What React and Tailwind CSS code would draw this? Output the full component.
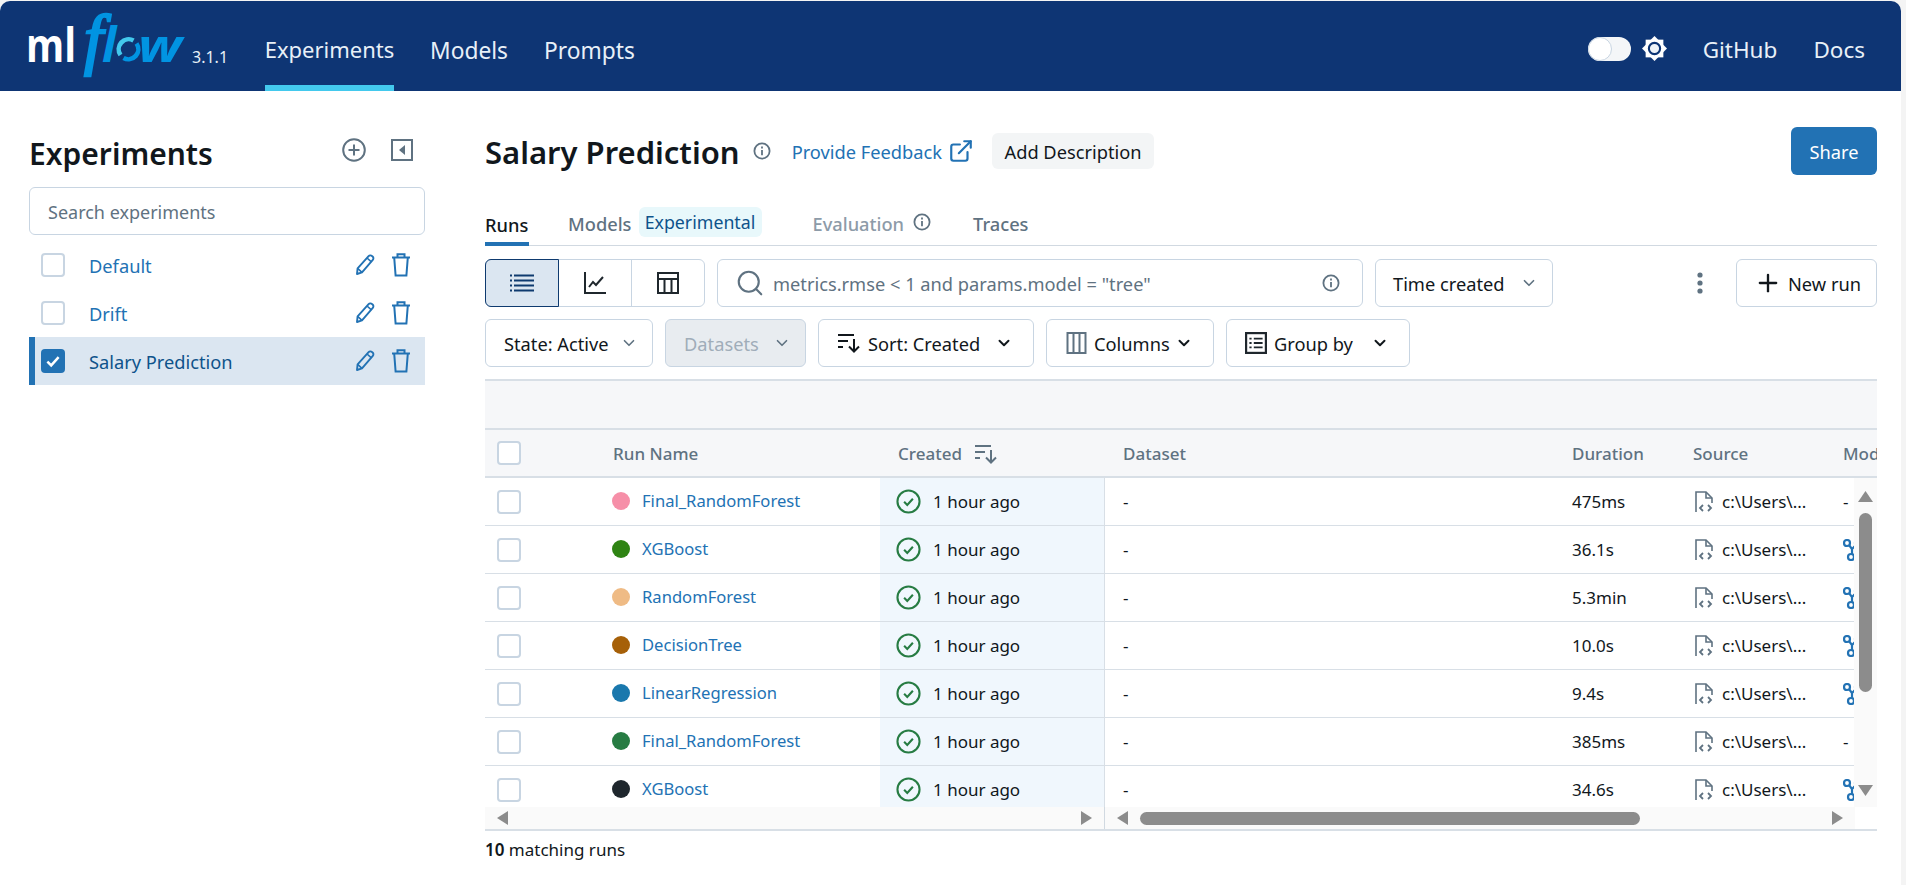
import { ChevronDown, Search, Plus, ExternalLink } from 'lucide-react';

const runs = [
  { name: 'Final_RandomForest', color: 'bg-[#f68fa8]', duration: '475ms', model: false },
  { name: 'XGBoost', color: 'bg-[#2f8413]', duration: '36.1s', model: true },
  { name: 'RandomForest', color: 'bg-[#efbb85]', duration: '5.3min', model: true },
  { name: 'DecisionTree', color: 'bg-[#a66008]', duration: '10.0s', model: true },
  { name: 'LinearRegression', color: 'bg-[#1a78ad]', duration: '9.4s', model: true },
  { name: 'Final_RandomForest', color: 'bg-[#277c43]', duration: '385ms', model: false },
  { name: 'XGBoost', color: 'bg-[#1f272d]', duration: '34.6s', model: true },
];

function InfoIcon({ className }) {
  return (
    <svg viewBox="0 0 18 18" fill="none" className={className}>
      <circle cx="9" cy="9" r="7.6" stroke="currentColor" strokeWidth="1.8" />
      <path d="M9 8v5.2M9 4.6v1.8" stroke="currentColor" strokeWidth="1.8" />
    </svg>
  );
}

function SortIcon({ className }) {
  return (
    <svg viewBox="0 0 24 20" fill="none" className={className}>
      <path d="M1 2h16M1 8h10M1 14h5" stroke="currentColor" strokeWidth="2" />
      <path d="M17 6v12M12 13.5l5 5 5-5" stroke="currentColor" strokeWidth="2" />
    </svg>
  );
}

function SourceIcon() {
  return (
    <svg viewBox="0 0 18 22" fill="none" className="w-[18px] h-[22px] text-[#5f7281]">
      <path d="M1 21V1h10l6 6v5" stroke="currentColor" strokeWidth="1.6" />
      <path d="M11 1v6h6" stroke="currentColor" strokeWidth="1.6" />
      <path d="M8 14l-3 3 3 3M13 14l3 3-3 3" stroke="currentColor" strokeWidth="1.8" />
    </svg>
  );
}

function ModelIcon() {
  return (
    <svg viewBox="0 0 20 22" fill="none" className="w-[20px] h-[22px] text-[#2272b4] shrink-0">
      <circle cx="4" cy="4" r="3" stroke="currentColor" strokeWidth="2.2" />
      <circle cx="15" cy="4" r="3" stroke="currentColor" strokeWidth="2.2" />
      <circle cx="8" cy="18" r="3" stroke="currentColor" strokeWidth="2.2" />
      <path d="M6 6l3 4v5M13 6l-4 4" stroke="currentColor" strokeWidth="2.2" />
    </svg>
  );
}

function CheckCircle() {
  return (
    <svg viewBox="0 0 24 24" fill="none" className="w-[25px] h-[25px] text-[#277c43] shrink-0">
      <circle cx="12" cy="12" r="10.6" stroke="currentColor" strokeWidth="2" />
      <path d="M7.8 12.3l3 3 5.4-6" stroke="currentColor" strokeWidth="2" />
    </svg>
  );
}

function PencilIcon() {
  return (
    <svg viewBox="0 0 20 22" fill="none" className="w-[20px] h-[22px] text-[#2272b4] shrink-0">
      <path d="M2 20l.6-5.6L13.6 2.2a2.4 2.4 0 0 1 3.4-.2l.6.5a2.4 2.4 0 0 1 .2 3.4L7 18.3z" stroke="currentColor" strokeWidth="1.9" strokeLinejoin="round" />
      <path d="M2.6 14.4L7 18.3M12 4l4.4 3.9" stroke="currentColor" strokeWidth="1.6" />
    </svg>
  );
}

function TrashIcon() {
  return (
    <svg viewBox="0 0 20 24" fill="none" className="w-[20px] h-[24px] text-[#2272b4] shrink-0">
      <path d="M6.5 4V1.2h7V4M1 4.5h18" stroke="currentColor" strokeWidth="2" />
      <path d="M3.2 4.5L4.6 22.5h10.8L16.8 4.5" stroke="currentColor" strokeWidth="2" />
    </svg>
  );
}

function Arrow({ dir }) {
  const paths = {
    left: 'M11 0v14L0 7z',
    right: 'M0 0v14l11-7z',
    up: 'M7.5 0L15 11H0z',
    down: 'M0 0h15L7.5 11z',
  };
  const size = dir === 'left' || dir === 'right' ? 'w-[11px] h-[14px]' : 'w-[15px] h-[11px]';
  const box = dir === 'left' || dir === 'right' ? '0 0 11 14' : '0 0 15 11';
  return (
    <svg viewBox={box} className={size + ' text-[#8c8c8c] shrink-0'}>
      <path d={paths[dir]} fill="currentColor" />
    </svg>
  );
}

function Checkbox() {
  return <div className="w-[24px] h-[24px] rounded-[4px] border-2 border-[#c8d5e2] bg-white shrink-0" />;
}

function Logo() {
  return (
    <svg viewBox="-3 0 159 90" className="w-[159px] h-[90px] shrink-0">
      <text x="-3" y="61" fontFamily="Open Sans" fontSize="46" fontWeight="700" fill="#fff" textLength="50" lengthAdjust="spacingAndGlyphs">ml</text>
      <text x="55" y="61" fontFamily="Liberation Serif" fontStyle="italic" fontSize="68" fill="#0194e2" stroke="#0194e2" strokeWidth="2.4">f</text>
      <text x="73" y="61" fontFamily="Open Sans" fontStyle="italic" fontSize="48" fontWeight="700" fill="#0194e2">l</text>
      <path d="M91.5 54a10 10 0 0 1 13-14.5" stroke="#43c9ed" strokeWidth="4.6" fill="none" />
      <path d="M107.5 42.5a10 10 0 0 1-13 14.5" stroke="#0194e2" strokeWidth="4.6" fill="none" />
      <text x="109" y="61" fontFamily="Open Sans" fontStyle="italic" fontSize="45" fontWeight="700" fill="#0194e2" textLength="44" lengthAdjust="spacingAndGlyphs">w</text>
    </svg>
  );
}

function ExperimentRow({ name, selected }) {
  return (
    <div className={'flex items-center h-[48px] ' + (selected ? 'bg-[#dbe6f1] border-l-[6px] border-[#2272b4] pl-[6px]' : 'pl-[12px]')}>
      {selected ? (
        <div className="w-[24px] h-[24px] rounded-[4px] bg-[#2272b4] flex items-center justify-center shrink-0">
          <svg viewBox="0 0 16 16" fill="none" className="w-[18px] h-[18px]">
            <path d="M3 8.5l3.4 3.4L13 4.5" stroke="#fff" strokeWidth="2.2" />
          </svg>
        </div>
      ) : (
        <Checkbox />
      )}
      <span className={'ml-[24px] pt-[2px] flex-1 text-[18.25px] ' + (selected ? 'text-[#0e538b]' : 'text-[#2272b4]')}>{name}</span>
      <PencilIcon />
      <div className="ml-[16px] mr-[14px]"><TrashIcon /></div>
    </div>
  );
}

function FilterButton({ children, className }) {
  return (
    <div className={'h-[48px] flex items-center rounded-[6px] border border-[#c8d5e2] text-[18.25px] ' + className}>
      {children}
    </div>
  );
}

export default function App() {
  return (
    <div className="w-[1906px] h-[885px] bg-[#f4f4f4] overflow-hidden pt-[1px] font-['Noto_Sans',sans-serif] text-[#11171c]">
      <div className="w-[1901px] h-[884px] bg-white rounded-t-[10px] overflow-hidden flex flex-col">
        {/* Top bar */}
        <header className="h-[90px] bg-[#0e3574] flex items-stretch shrink-0 text-[#e8f0f8]">
          <div className="ml-[26px] flex items-center">
            <Logo />
          </div>
          <span className="ml-[7px] mt-[44px] text-[16px] w-[37px]">3.1.1</span>
          <nav className="ml-[36px] flex gap-[36px] text-[22.75px]">
            <div className="w-[129px] flex items-center justify-center whitespace-nowrap text-[22px] border-b-[6px] border-[#43c9ed] pt-[13px]">Experiments</div>
            <div className="flex items-center pt-[10px]">Models</div>
            <div className="flex items-center pt-[10px]">Prompts</div>
          </nav>
          <div className="ml-auto flex items-center text-[22.5px] pr-[36px] pt-[7px]">
            <div className="relative w-[43px] h-[24px] rounded-full bg-[#f4f6f8] mt-[-2px]">
              <div className="absolute left-0 top-0 w-[24px] h-[24px] rounded-full bg-white border border-[#c8d5e2]" />
            </div>
            <svg viewBox="0 0 24 24" className="w-[25px] h-[25px] ml-[11px] mr-[2px] mt-[-2px]">
              <rect x="3.5" y="3.5" width="17" height="17" fill="#fff" />
              <rect x="3.5" y="3.5" width="17" height="17" fill="#fff" transform="rotate(45 12 12)" />
              <circle cx="12" cy="12" r="5.4" fill="#f0f4f8" stroke="#0e3574" strokeWidth="2" />
            </svg>
            <span className="ml-[34px]">GitHub</span>
            <span className="ml-[36px]">Docs</span>
          </div>
        </header>

        <div className="flex flex-1 min-h-0">
          {/* Sidebar */}
          <aside className="w-[396px] ml-[29px] shrink-0 pt-[36px]">
            <div className="flex items-center h-[50px]">
              <h1 className="text-[30px] font-semibold flex-1 leading-none pt-[3px]">Experiments</h1>
              <svg viewBox="0 0 24 24" fill="none" className="w-[24px] h-[24px] text-[#5f7281] mb-[4px]">
                <circle cx="12" cy="12" r="10.8" stroke="currentColor" strokeWidth="2" />
                <path d="M12 6.5v11M6.5 12h11" stroke="currentColor" strokeWidth="2" />
              </svg>
              <svg viewBox="0 0 22 22" fill="none" className="w-[22px] h-[22px] text-[#5f7281] ml-[25px] mr-[12px] mb-[4px]">
                <rect x="1" y="1" width="20" height="20" stroke="currentColor" strokeWidth="2" />
                <path d="M14 6v10l-6-5z" fill="currentColor" />
              </svg>
            </div>
            <div className="mt-[10px] h-[48px] rounded-[6px] border border-[#c8d5e2] flex items-center pl-[18px] pt-[2px] text-[18px] text-[#5f7281]">
              Search experiments
            </div>
            <div className="mt-[6px]">
              <ExperimentRow name="Default" />
              <ExperimentRow name="Drift" />
              <ExperimentRow name="Salary Prediction" selected />
            </div>
          </aside>

          {/* Main */}
          <main className="ml-[60px] w-[1392px] shrink-0 flex flex-col">
            <div className="h-[48px] mt-[36px] flex items-center">
              <h2 className="text-[31px] font-semibold leading-none pt-[3px]">Salary Prediction</h2>
              <InfoIcon className="w-[18px] h-[18px] text-[#5f7281] ml-[13px]" />
              <span className="ml-[21px] pt-[2px] text-[18.25px] text-[#2272b4]">Provide Feedback</span>
              <ExternalLink size={26} strokeWidth={2} className="text-[#2272b4] ml-[6px]" />
              <div className="ml-[18px] w-[162px] h-[36px] bg-[#f3f5f6] rounded-[6px] flex items-center justify-center pt-[2px] text-[18.25px] whitespace-nowrap">
                Add Description
              </div>
              <div className="ml-auto w-[86px] h-[48px] bg-[#2272b4] text-white rounded-[6px] flex items-center justify-center pt-[1px] text-[18.25px]">
                Share
              </div>
            </div>

            {/* Tabs */}
            <div className="mt-[33px] h-[38px] flex items-start border-b border-[#d1d9e1] text-[18.25px] font-medium text-[#5f7281]">
              <div className="w-[44px] h-[38px] border-b-[4px] border-[#2272b4] text-[#11171c] flex items-center">Runs</div>
              <div className="ml-[39px] h-[32px] flex items-center">Models</div>
              <div className="ml-[7px] mt-[-1px] w-[123px] h-[30px] rounded-[6px] bg-[#e8f8fb] text-[#0e538b] font-normal text-[17.75px] flex items-center justify-center whitespace-nowrap pt-[1px]">Experimental</div>
              <div className="ml-[51px] h-[32px] flex items-center text-[#8d9ba8]">Evaluation</div>
              <InfoIcon className="w-[18px] h-[18px] text-[#5f7281] ml-[9px] mt-[5px]" />
              <div className="ml-[42px] h-[32px] flex items-center">Traces</div>
            </div>

            {/* View toggle and search */}
            <div className="mt-[13px] flex items-center">
              <div className="flex w-[220px] h-[48px] rounded-[6px] border border-[#c8d5e2]">
                <div className="w-[74px] ml-[-1px] my-[-1px] rounded-l-[6px] border border-[#0e3a6f] bg-[#dbe6f1] flex items-center justify-center">
                  <svg viewBox="0 0 24 18" fill="none" className="w-[24px] h-[18px] text-[#0e3a6f]">
                    <path d="M4 1.5h20M4 6.5h20M4 11.5h20M4 16.5h20" stroke="currentColor" strokeWidth="2" />
                    <path d="M0 1.5h2M0 6.5h2M0 11.5h2M0 16.5h2" stroke="currentColor" strokeWidth="2" />
                  </svg>
                </div>
                <div className="w-[73px] border-r border-[#c8d5e2] flex items-center justify-center">
                  <svg viewBox="0 0 22 22" fill="none" className="w-[22px] h-[22px] text-[#1f272d]">
                    <path d="M1 0v21h21" stroke="currentColor" strokeWidth="2" />
                    <path d="M5 15l4-5 3 3 7-8" stroke="currentColor" strokeWidth="2" />
                  </svg>
                </div>
                <div className="flex-1 flex items-center justify-center">
                  <svg viewBox="0 0 22 22" fill="none" className="w-[22px] h-[22px] text-[#1f272d]">
                    <rect x="1" y="1" width="20" height="20" stroke="currentColor" strokeWidth="2" />
                    <path d="M1 7h20M7.5 7v14M14.5 7v14" stroke="currentColor" strokeWidth="2" />
                  </svg>
                </div>
              </div>
              <div className="ml-[12px] w-[646px] h-[48px] rounded-[6px] border border-[#c8d5e2] flex items-center pl-[17px] pr-[22px] text-[18.25px] text-[#5f7281]">
                <Search size={30} strokeWidth={1.7} />
                <span className="ml-[8px] pt-[1px] flex-1">metrics.rmse &lt; 1 and params.model = "tree"</span>
                <InfoIcon className="w-[18px] h-[18px]" />
              </div>
              <FilterButton className="ml-[12px] w-[178px] pl-[17px] pr-[14px] justify-between">
                <span className="pt-[1px]">Time created</span>
                <ChevronDown size={18} strokeWidth={2.2} className="text-[#5f7281]" />
              </FilterButton>
              <svg viewBox="0 0 6 22" className="w-[6px] h-[22px] ml-[144px] text-[#5f7281]">
                <circle cx="3" cy="3" r="2.6" fill="currentColor" />
                <circle cx="3" cy="11" r="2.6" fill="currentColor" />
                <circle cx="3" cy="19" r="2.6" fill="currentColor" />
              </svg>
              <FilterButton className="ml-auto w-[141px] pl-[17px] gap-[6px]">
                <Plus size={28} strokeWidth={2} />
                <span className="pt-[1px]">New run</span>
              </FilterButton>
            </div>

            {/* Filters */}
            <div className="mt-[12px] flex gap-[12px]">
              <FilterButton className="w-[168px] pl-[18px] pr-[14px] justify-between">
                <span className="pt-[1px]">State: Active</span>
                <ChevronDown size={18} strokeWidth={2.2} className="text-[#5f7281]" />
              </FilterButton>
              <FilterButton className="w-[141px] pl-[18px] pr-[14px] justify-between bg-[#e8ecf0] text-[#a0adb9]">
                <span className="pt-[1px]">Datasets</span>
                <ChevronDown size={18} strokeWidth={2.2} className="text-[#5f7281]" />
              </FilterButton>
              <FilterButton className="w-[216px] pl-[18px] pr-[20px] justify-between">
                <span className="flex items-center gap-[7px]">
                  <SortIcon className="w-[24px] h-[20px]" />
                  <span className="pt-[1px]">Sort: Created</span>
                </span>
                <ChevronDown size={18} strokeWidth={2.6} />
              </FilterButton>
              <FilterButton className="w-[168px] pl-[19px] pr-[20px] justify-between">
                <span className="flex items-center gap-[7px]">
                  <svg viewBox="0 0 20 22" fill="none" className="w-[21px] h-[22px] text-[#5f7281]">
                    <rect x="1" y="1" width="18" height="20" stroke="currentColor" strokeWidth="2" />
                    <path d="M7 1v20M13 1v20" stroke="currentColor" strokeWidth="2" />
                  </svg>
                  <span className="pt-[1px]">Columns</span>
                </span>
                <ChevronDown size={18} strokeWidth={2.6} />
              </FilterButton>
              <FilterButton className="w-[184px] pl-[18px] pr-[20px] justify-between">
                <span className="flex items-center gap-[7px]">
                  <svg viewBox="0 0 20 20" fill="none" className="w-[22px] h-[22px] text-[#1f272d]">
                    <rect x="1" y="1" width="18" height="18" stroke="currentColor" strokeWidth="2" />
                    <path d="M4 6h2M8 6h8M4 10h2M8 10h8M4 14h2M8 14h8" stroke="currentColor" strokeWidth="1.6" />
                  </svg>
                  <span className="pt-[1px]">Group by</span>
                </span>
                <ChevronDown size={18} strokeWidth={2.6} />
              </FilterButton>
            </div>

            {/* Table */}
            <div className="mt-[12px] flex flex-col">
              <div className="h-[51px] bg-[#f6f7f9] border-t-2 border-b-2 border-[#d8dfe6]" />
              <div className="h-[48px] bg-[#f6f7f9] border-b-2 border-[#d8dfe6] flex items-center text-[17px] font-medium text-[#5f7281] overflow-hidden">
                <div className="w-[128px] pl-[12px] shrink-0"><Checkbox /></div>
                <div className="w-[267px] shrink-0 pt-[1px]">Run Name</div>
                <div className="w-[225px] shrink-0 pl-[18px] pt-[1px] flex items-center">
                  Created
                  <SortIcon className="w-[24px] h-[20px] ml-[12px]" />
                </div>
                <div className="w-[467px] shrink-0 pl-[18px] pt-[1px]">Dataset</div>
                <div className="w-[121px] shrink-0 pt-[1px]">Duration</div>
                <div className="w-[150px] shrink-0 pt-[1px]">Source</div>
                <div className="shrink-0 pt-[1px]">Models</div>
              </div>

              <div className="flex h-[329px]">
                <div className="w-[1369px] overflow-hidden">
                  {runs.map((run, i) => (
                    <div key={i} className="h-[48px] border-b border-[#d8dfe6] flex items-center text-[17px] box-border">
                      <div className="w-[128px] pl-[12px] shrink-0"><Checkbox /></div>
                      <div className="w-[267px] shrink-0 flex items-center">
                        <span className={'ml-[-1px] w-[18px] h-[18px] rounded-full ' + run.color} />
                        <span className="ml-[12px] text-[16.6px] text-[#2272b4]">{run.name}</span>
                      </div>
                      <div className="w-[225px] h-full shrink-0 pl-[16px] bg-[#f0f7fd] border-r border-[#d8dfe6] flex items-center">
                        <CheckCircle />
                        <span className="ml-[12px]">1 hour ago</span>
                      </div>
                      <div className="w-[467px] shrink-0 pl-[18px]">-</div>
                      <div className="w-[121px] shrink-0">{run.duration}</div>
                      <div className="w-[150px] shrink-0 flex items-center pl-[2px]">
                        <SourceIcon />
                        <span className="ml-[9px]">c:\Users\...</span>
                      </div>
                      <div className="flex-1 overflow-hidden">{run.model ? <ModelIcon /> : <span>-</span>}</div>
                    </div>
                  ))}
                </div>
                <div className="flex-1 bg-[#fafafa] flex flex-col items-center pt-[13px] pb-[11px]">
                  <Arrow dir="up" />
                  <div className="mt-[11px] w-[13px] h-[179px] rounded-full bg-[#8c8c8c]" />
                  <div className="mt-auto"><Arrow dir="down" /></div>
                </div>
              </div>

              {/* Horizontal scrollbars */}
              <div className="h-[24px] flex border-b-2 border-[#d8dfe6]">
                <div className="w-[620px] bg-[#fafafa] border-r border-[#d1d9e1] flex items-center justify-between pl-[12px] pr-[12px]">
                  <Arrow dir="left" />
                  <Arrow dir="right" />
                </div>
                <div className="w-[750px] bg-[#fafafa] flex items-center pl-[12px] pr-[12px]">
                  <Arrow dir="left" />
                  <div className="ml-[12px] w-[500px] h-[13px] rounded-full bg-[#8c8c8c]" />
                  <div className="ml-auto"><Arrow dir="right" /></div>
                </div>
              </div>
              <div className="mt-[6px] text-[17px]"><span className="font-semibold">10</span> matching runs</div>
            </div>
          </main>
        </div>
      </div>
    </div>
  );
}
